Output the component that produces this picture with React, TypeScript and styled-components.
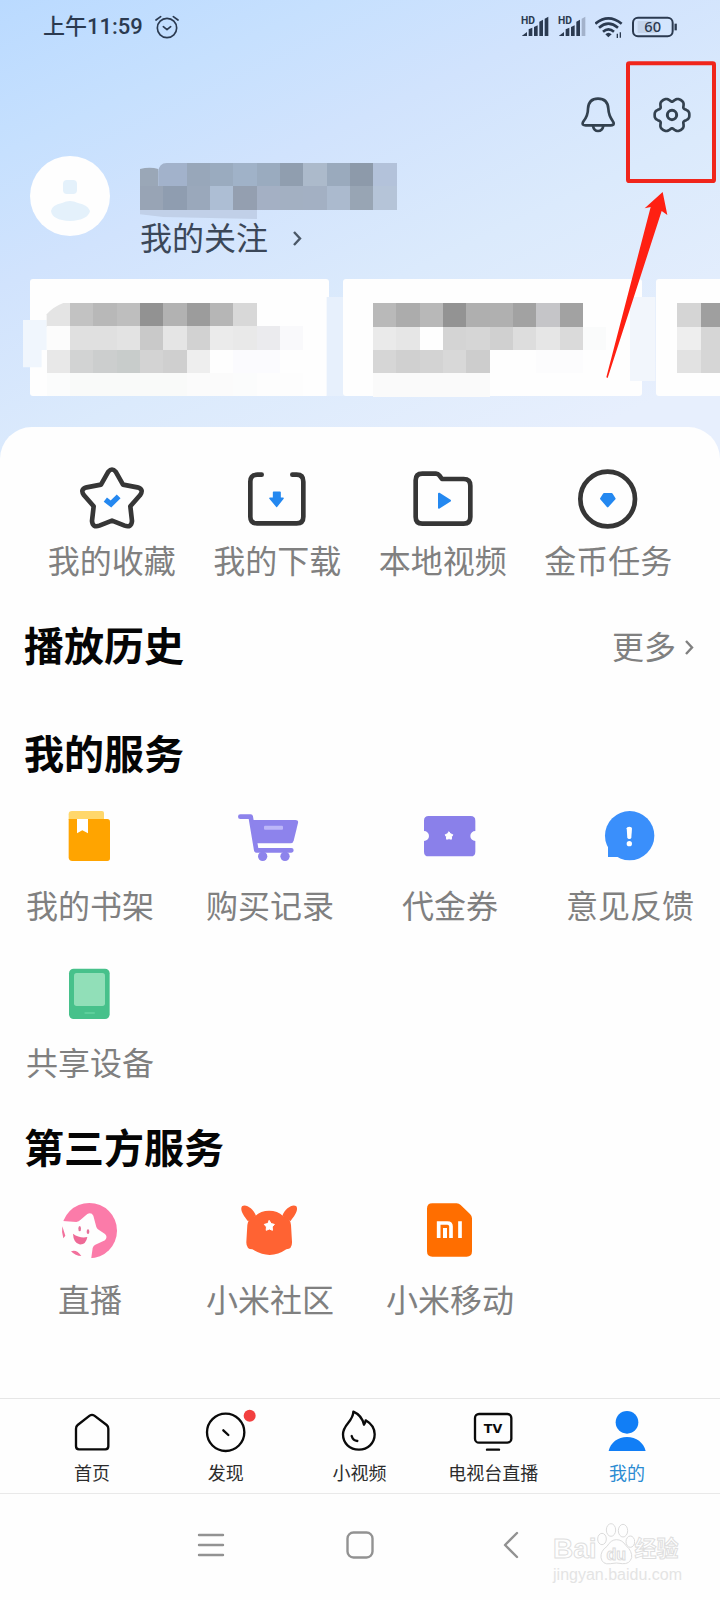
import React from 'react';
import styled, { createGlobalStyle } from 'styled-components';

const GlobalStyle = createGlobalStyle`
  * { box-sizing: border-box; }
  body {
    margin: 0;
    background: #fefefe;
    font-family: Roboto, "Noto Sans CJK SC", sans-serif;
  }
  h2 { margin: 0; }
  button { border: 0; padding: 0; background: none; font: inherit; color: inherit; }
  a { color: inherit; text-decoration: none; }
  svg { display: block; flex: none; }
`;

const Page = styled.div`
  position: relative;
  min-height: 100vh;
  display: flex;
  flex-direction: column;
  overflow: hidden;
  background: linear-gradient(155deg, #badaff 0, #c6e0fe 140px, #d1e3fd 260px, #dbeafc 420px, #e7effd 640px);
`;

const StatusBar = styled.div`
  height: 52px;
  padding: 1px 43px 0;
  display: flex;
  align-items: center;
  justify-content: space-between;
  color: #2b3a50;
`;

const StatusGroup = styled.div<{ $gap: number }>`
  display: flex;
  align-items: center;
  gap: ${(p) => p.$gap}px;
`;

const SignalIcon = styled.svg`
  overflow: visible;
`;

const Clock = styled.span`
  font-size: 22px;
  line-height: 32px;
  font-weight: 500;
`;

const Actions = styled.div`
  height: 104px;
  padding: 22px 29px 0 0;
  display: flex;
  align-items: center;
  justify-content: flex-end;
  gap: 36px;
`;

const Profile = styled.section`
  display: flex;
  gap: 30px;
  padding: 0 30px;
`;

const ProfileText = styled.div`
  padding-top: 7px;
`;

const FollowLink = styled.a`
  display: flex;
  align-items: center;
  gap: 24px;
  font-size: 32px;
  line-height: 40px;
  color: #3b4758;
`;

const CardStrip = styled.section`
  display: flex;
  gap: 14px;
  padding: 20px 0 31px 30px;
  overflow: hidden;
`;

const Card = styled.article`
  flex: none;
  width: 299px;
  height: 117px;
  background: #fefefe;
  border-radius: 3px;

  svg { margin-left: -7px; overflow: visible; }
`;

const Sheet = styled.main`
  flex: 1;
  padding: 40px 0 77px;
  background: #fefefe;
  border-radius: 32px 32px 0 0;
`;

const IconGrid = styled.div<{ $inset: number; $gap: number }>`
  display: grid;
  grid-template-columns: repeat(4, 1fr);
  row-gap: 34px;
  padding: 0 ${(p) => p.$inset}px;

  a { gap: ${(p) => p.$gap}px; }
`;

const IconLink = styled.a`
  display: flex;
  flex-direction: column;
  align-items: center;
  font-size: 32px;
  line-height: 40px;
  color: #808080;
  white-space: nowrap;
`;

const SectionHead = styled.div<{ $top: number; $bottom: number }>`
  display: flex;
  align-items: center;
  justify-content: space-between;
  padding: 0 24px;
  margin: ${(p) => p.$top}px 0 ${(p) => p.$bottom}px;
`;

const SectionTitle = styled.h2`
  font-size: 40px;
  line-height: 56px;
  font-weight: 700;
  color: #050505;
`;

const MoreLink = styled.a`
  display: flex;
  align-items: center;
  gap: 8px;
  font-size: 32px;
  line-height: 40px;
  color: #808080;
`;

const TabBar = styled.nav`
  display: grid;
  grid-template-columns: repeat(5, 1fr);
  padding: 10px 26px 7px 25px;
  background: #fefefe;
  border-top: 1px solid #e6e6e6;
  border-bottom: 1px solid #e9e9e9;
`;

const Tab = styled.a<{ $active?: boolean }>`
  display: flex;
  flex-direction: column;
  align-items: center;
  gap: 9px;
  font-size: 18px;
  line-height: 24px;
  color: ${(p) => (p.$active ? '#2b8bd2' : '#2c2c2c')};
  white-space: nowrap;

  svg { overflow: visible; }
`;

const SystemNav = styled.nav`
  display: flex;
  align-items: center;
  justify-content: center;
  gap: 118px;
  height: 106px;
  padding-bottom: 4px;
  background: #fefefe;
`;

const Annotation = styled.svg`
  position: absolute;
  top: 60px;
  right: 0;
  pointer-events: none;
`;

const Watermark = styled.div`
  position: absolute;
  right: 38px;
  bottom: 15px;
  color: #fefefe;
  font-family: "Liberation Sans", "Noto Sans CJK SC", sans-serif;
  -webkit-text-stroke: 1px #dedede;
`;

const WatermarkLogo = styled.div`
  display: flex;
  align-items: flex-end;
  font-size: 28px;
  line-height: 32px;
  font-weight: 700;
`;

const WatermarkName = styled.span`
  font-size: 22px;
`;

const WatermarkUrl = styled.div`
  font-size: 16px;
  line-height: 20px;
  color: #e4e4e4;
  -webkit-text-stroke: 0;
`;

type ArtProps = { size?: number; box: string; children: React.ReactNode };

const Art = ({ size = 64, box, children }: ArtProps) => (
  <svg width={size} height={size} viewBox={box} fill="none" strokeLinecap="round" strokeLinejoin="round" aria-hidden="true">
    {children}
  </svg>
);

const Chevron = ({ color }: { color: string }) => (
  <svg width="12" height="18" viewBox="0 0 12 18" fill="none" aria-hidden="true">
    <path d="M2 2L8 8.500L2 15" stroke={color} strokeWidth="2.400" />
  </svg>
);

/* Blurred-out text: rows of 70-unit tiles, three units to the pixel. */
const Tiles = ({ x, y, rows }: { x: number; y: number; rows: string[] }) => (
  <g shapeRendering="crispEdges">
    {rows.map((row, r) =>
      row.split(' ').map((c, i) => (
        <rect key={`${r}-${i}`} x={x + i * 70} y={y + r * 70} width="70" height="70" fill={`#${c}`} />
      )),
    )}
  </g>
);

const gearPath = (() => {
  const pts: string[] = [];
  for (let a = 0; a < 360; a += 4) {
    const t = (a * Math.PI) / 180;
    const r = 52 - 12 * Math.pow((1 - Math.cos(6 * t)) / 2, 2);
    pts.push(`${(936 + r * Math.cos(t)).toFixed(1)},${(344 + r * Math.sin(t)).toFixed(1)}`);
  }
  return `M${pts.join('L')}Z`;
})();

const starPoints = (cx: number, cy: number, outer: number, inner: number) =>
  Array.from({ length: 10 }, (_, i) => {
    const r = i % 2 ? inner : outer;
    const t = (i * 36 - 90) * (Math.PI / 180);
    return `${(cx + r * Math.cos(t)).toFixed(1)},${(cy + r * Math.sin(t)).toFixed(1)}`;
  }).join(' ');

const Signal = ({ weak }: { weak?: boolean }) => (
  <SignalIcon width="29" height="23" viewBox="0 0 87 69" fill="#2b3a50" aria-hidden="true">
    <text x="0" y="27" fontSize="31" fontWeight="700" fontFamily="Roboto" fill="#2b3a50">HD</text>
    <path d="M3 62L18 51V63H3ZM23 43L34 38V63H23ZM39 36L50 31V63H39ZM55 20L66 14V63H55Z" />
    <path d="M71 11L82 5V63H71Z" fill={weak ? '#a3b2cb' : '#2b3a50'} />
  </SignalIcon>
);

const quickLinks = [
  {
    label: '我的收藏',
    art: (
      <Art box="240 81 192 192">
        <path d="M303 134L325 95Q336 82 347 95L369 134L412 142Q433 148 420 166L391 199L396 243Q394 264 374 257L336 242L298 257Q278 264 276 243L281 199L252 166Q239 148 260 142Z" stroke="#363636" strokeWidth="14" />
        <path d="M316 179L333 192L356 169" stroke="#2488f0" strokeWidth="16" strokeLinecap="butt" strokeLinejoin="miter" />
      </Art>
    ),
  },
  {
    label: '我的下载',
    art: (
      <Art box="735 81 192 192">
        <path d="M785 104H772Q751 104 751 125V230Q751 250 771 250H890Q910 250 910 230V125Q910 104 890 104H877" stroke="#363636" strokeWidth="14" />
        <path d="M821 157H840V175H849L830 199L810 175H821Z" fill="#2488f0" stroke="#2488f0" strokeWidth="5" />
      </Art>
    ),
  },
  {
    label: '本地视频',
    art: (
      <Art box="150 81 192 192">
        <path d="M184 101H225Q231 101 235 106L243 117H308Q328 117 328 137V231Q328 251 308 251H184Q164 251 164 231V121Q164 101 184 101Z" stroke="#363636" strokeWidth="14" />
        <path d="M234 161L267 182L234 203Z" fill="#2488f0" stroke="#2488f0" strokeWidth="6" />
      </Art>
    ),
  },
  {
    label: '金币任务',
    art: (
      <Art box="648 81 192 192">
        <circle cx="743" cy="177" r="82" stroke="#363636" strokeWidth="14" />
        <path d="M732 162H755L764 176L743 199L723 176Z" fill="#2488f0" stroke="#2488f0" strokeWidth="6" />
      </Art>
    ),
  },
];

const services = [
  {
    label: '我的书架',
    art: (
      <Art box="174 252 192 192">
        <path d="M206 300V283Q206 273 216 273H306Q312 273 312 279V300Z" fill="#ffd76b" />
        <path d="M206 297H322Q330 297 330 305V415Q330 423 322 423H217Q206 423 206 412Z" fill="#ffa400" />
        <path d="M231 297H264V340L247 331L231 340Z" fill="#fff" />
      </Art>
    ),
  },
  {
    label: '购买记录',
    art: (
      <Art box="714 252 192 192">
        <path d="M721 290H752L769 391H874" stroke="#8d83ec" strokeWidth="14" />
        <path d="M757 300H886Q896 300 894 309L881 362Q879 370 871 370H768Z" fill="#8d83ec" />
        <circle cx="788" cy="409" r="14" fill="#8d83ec" />
        <circle cx="855" cy="409" r="14" fill="#8d83ec" />
        <rect x="792" y="317" width="57" height="12" rx="3" fill="#bcb6f8" />
      </Art>
    ),
  },
  {
    label: '代金券',
    art: (
      <Art box="174 72 192 192">
        <path d="M206 108H332Q346 108 346 122V153A15 15 0 0 0 346 183V215Q346 229 332 229H206Q192 229 192 215V183A15 15 0 0 0 192 153V122Q192 108 206 108Z" fill="#8a80ea" />
        <polygon points={starPoints(267, 168, 12, 8)} fill="#fff" stroke="#fff" strokeWidth="3" />
      </Art>
    ),
  },
  {
    label: '意见反馈',
    art: (
      <Art box="714 72 192 192">
        <circle cx="809" cy="167" r="74" fill="#3a8ffb" />
        <path d="M744 195V231H800V195Z" fill="#3a8ffb" />
        <path d="M800 145Q800 140 808 140Q816 140 816 145L814 173Q813 177 808 177Q803 177 802 173Z" fill="#fff" />
        <circle cx="808" cy="191" r="8" fill="#fff" />
      </Art>
    ),
  },
  {
    label: '共享设备',
    art: (
      <Art box="174 723 192 192">
        <rect x="207" y="746" width="122" height="151" rx="14" fill="#47c18b" />
        <rect x="222" y="759" width="93" height="99" rx="8" fill="#91dfb8" />
        <path d="M256 879H282" stroke="#5dcf9b" strokeWidth="6" />
      </Art>
    ),
  },
];

const partners = [
  {
    label: '直播',
    art: (
      <Art box="174 264 192 192">
        <circle cx="268" cy="362" r="83" fill="#fb7ba9" />
        <path d="M178 332L229 336Q237 335 241 330L262 312Q274 306 280 317L289 351Q291 357 297 360L315 372Q324 380 315 391L286 404Q280 407 278 414L273 450H178Z" fill="#fefefe" />
        <path d="M187 349L196 377L190 385Q184 366 187 349ZM213 424Q230 417 244 438Q226 438 213 424Z" fill="#f2709c" />
        <ellipse cx="239" cy="356" rx="4" ry="8" fill="#e5709a" />
        <ellipse cx="264" cy="365" rx="4" ry="7" fill="#e5709a" />
        <path d="M219 371Q240 386 262 381Q258 405 238 403Q220 397 219 371Z" fill="#ee6a97" />
      </Art>
    ),
  },
  {
    label: '小米社区',
    art: (
      <Art box="714 264 192 192">
        <path d="M766 318C785 297 830 297 849 318Q870 322 873 345L876 395Q877 417 859 418Q810 452 757 418Q738 417 739 395L742 345Q746 322 766 318Z" fill="#ff6333" />
        <path d="M744 334C730 316 719 299 726 289C736 280 759 294 768 317ZM871 334C885 316 896 299 889 289C879 280 856 294 847 317Z" fill="#ff6333" />
        <polygon points={starPoints(808, 348, 16, 9)} fill="#fff" stroke="#fff" strokeWidth="3" />
      </Art>
    ),
  },
  {
    label: '小米移动',
    art: (
      <Art box="174 54 192 192">
        <path d="M217 70H290Q297 70 302 75L330 102Q336 108 336 115V214Q336 230 320 230H217Q201 230 201 214V86Q201 70 217 70Z" fill="#ff6e00" />
        <path d="M236 174V129H262Q273 129 273 139V174M300 124V174" stroke="#fff" strokeWidth="11" strokeLinecap="butt" strokeLinejoin="miter" />
        <path d="M255 144V174" stroke="#fff" strokeWidth="12" strokeLinecap="butt" />
      </Art>
    ),
  },
];

const tabs = [
  {
    label: '首页',
    art: (
      <Art size={44} box="210 87 132 132">
        <path d="M228 146Q228 139 233 135L269 107Q276 102 283 107L320 135Q325 139 325 146V199Q325 208 316 208H237Q228 208 228 199Z" stroke="#0a0a0a" strokeWidth="7" />
      </Art>
    ),
  },
  {
    label: '发现',
    art: (
      <Art size={44} box="610 87 132 132">
        <circle cx="675" cy="157" r="56" stroke="#0a0a0a" strokeWidth="7" />
        <path d="M668 151L683 165" stroke="#0a0a0a" strokeWidth="7" />
        <circle cx="747" cy="107" r="18" fill="#f23f3f" />
      </Art>
    ),
  },
  {
    label: '小视频',
    art: (
      <Art size={44} box="-66 87 132 132">
        <path d="M-17 95C0 102 10 114 15 134Q19 130 20 121C37 131 47 145 47 163C47 190 26 209 0 209C-28 209 -48 190 -48 163C-48 132 -18 126 -17 95Z" stroke="#0a0a0a" strokeWidth="7" />
        <path d="M-22 168Q-18 182 -5 183" stroke="#0a0a0a" strokeWidth="7" />
      </Art>
    ),
  },
  {
    label: '电视台直播',
    art: (
      <Art size={44} box="334 87 132 132">
        <rect x="346" y="102" width="109" height="86" rx="12" stroke="#0a0a0a" strokeWidth="7" />
        <path d="M382 209H418" stroke="#0a0a0a" strokeWidth="7" />
        <text x="400" y="160" textAnchor="middle" fontSize="38" fontWeight="700" fontFamily="DejaVu Sans" fill="#0a0a0a">TV</text>
      </Art>
    ),
  },
  {
    label: '我的',
    active: true,
    art: (
      <Art size={44} box="736 87 132 132">
        <circle cx="802" cy="127" r="34" fill="#117ef6" />
        <path d="M747 213C752 188 775 171 802 171C830 171 852 188 858 213Z" fill="#117ef6" />
      </Art>
    ),
  },
];

export default function App() {
  return (
    <>
      <GlobalStyle />
      <Page>
        <StatusBar>
          <StatusGroup $gap={12}>
            <Clock>上午11:59</Clock>
            <Art size={24} box="466 42 72 72">
              <circle cx="502" cy="81" r="29" stroke="#2b3a50" strokeWidth="5" />
              <path d="M491 77L502 86L513 77M469 57L483 47M521 47L535 57" stroke="#2b3a50" strokeWidth="5" />
            </Art>
          </StatusGroup>
          <StatusGroup $gap={8}>
            <Signal />
            <Signal weak />
            <svg width="29" height="23" viewBox="702 42 87 69" fill="none" stroke="#2b3a50" strokeWidth="8" aria-hidden="true">
              <path d="M703 68Q742 36 782 68M714 80Q742 56 771 80M726 92Q742 78 759 92" />
              <path d="M733 100Q742 91 752 100L742 109Z" fill="#2b3a50" stroke="none" />
              <path d="M769 98V113M778 94V110" strokeWidth="4" />
            </svg>
            <svg width="45" height="23" viewBox="816 42 135 69" fill="none" aria-hidden="true">
              <rect x="833" y="60" width="58" height="36" fill="#c3d3ea" />
              <rect x="819" y="50" width="119" height="56" rx="15" stroke="#2b3a50" strokeWidth="6" />
              <path d="M947 68V88" stroke="#2b3a50" strokeWidth="7" />
              <text x="878" y="93" textAnchor="middle" fontSize="44" fontWeight="500" fontFamily="Noto Sans" fill="#2b3a50">60</text>
            </svg>
          </StatusGroup>
        </StatusBar>

        <Actions>
          <button type="button" aria-label="通知">
            <Art size={38} box="657 288 114 114">
              <path d="M669 374Q666 370 671 363Q684 346 684 326Q686 296 714 296Q743 296 745 326Q746 346 758 363Q763 370 760 374Q757 376 752 376H677Q671 376 669 374Z" stroke="#33414f" strokeWidth="8" />
              <path d="M699 378Q702 393 714 393Q727 393 730 378" stroke="#33414f" strokeWidth="8" />
            </Art>
          </button>
          <button type="button" aria-label="设置">
            <Art size={38} box="879 287 114 114">
              <path d={gearPath} stroke="#33414f" strokeWidth="8" />
              <circle cx="936" cy="344" r="14" stroke="#33414f" strokeWidth="9" />
            </Art>
          </button>
        </Actions>

        <Profile>
          <Art size={80} box="0 0 80 80">
            <circle cx="40" cy="40" r="40" fill="#fefefe" />
            <rect x="33" y="24" width="14" height="14" rx="4" fill="#e4f1fb" />
            <path d="M21 55Q22 49 32 47Q40 43 48 47Q58 49 60 55Q58 64 40 65Q22 64 21 55Z" fill="#e4f1fb" />
          </Art>
          <ProfileText>
            <svg width="257" height="56" viewBox="420 489 771 168" aria-hidden="true">
              <path d="M420 629H771V657L490 651L420 643Z" fill="#c1d0e8" />
              <path d="M420 507Q450 500 475 507V560H420Z" fill="#9aa7b7" />
              <path d="M475 560V515Q477 489 500 489H561V560Z" fill="#a2b2cb" />
              <Tiles x={560} y={489} rows={['98a7ba 9aabbf a0b2c8 9aabbf 909eaf acbacb 9aaabd 8d9aaa b3c2da']} />
              <Tiles x={420} y={559} rows={['98a4b5 8f9db0 9aa8bb adbed4 949fb0 a4b0c4 a3b0c2 a3b0c3 abbace 98a5b4 b5c4d8']} />
            </svg>
            <FollowLink href="#follow">
              我的关注
              <Chevron color="#4b5867" />
            </FollowLink>
          </ProfileText>
        </Profile>

        <CardStrip>
          <Card>
            <svg width="327" height="117" viewBox="69 57 981 351" aria-hidden="true">
              <path d="M69 180H140V270H125V322H69Z" fill="#f0f6fd" />
              <rect x="980" y="111" width="70" height="297" fill="#e7f0fc" />
              <path d="M210 129H190Q160 140 140 163V200H210Z" fill="#e4e4e4" />
              <Tiles x={210} y={129} rows={['c2c2c2 b8b8b8 bebebe 929292 b2b2b2 9c9c9c b6b6b6 d8d8d8']} />
              <Tiles
                x={140}
                y={199}
                rows={[
                  'fcfcfc e0e0e0 e0e0e0 e3e3e3 c9c9c9 e5e5e5 d2d2d2 ebebeb e9e9e9 ebebee f9f9fb',
                  'e8e8e8 d2d3d3 cccece c8cccb d3d3d3 cfcfcf eeeeee fefefe fbfbfe fbfbfe fefefe',
                  'fbfcfc f9faf9 f9faf9 f9faf9 f9faf9 f9faf9 fbfbfb fbfbfb fbfcfc fdfdfd fdfdfd',
                ]}
              />
            </svg>
          </Card>
          <Card>
            <svg width="327" height="117" viewBox="-72 297 981 351" aria-hidden="true">
              <rect x="810" y="351" width="76" height="252" fill="#f2f6fc" />
              <Tiles
                x={39}
                y={370}
                rows={[
                  'b9b9b9 acacac b8b8b8 939393 afafaf b0b0b0 a2a2a2 c5c5c8 a2a2a2',
                  'eaeaea e6e6e6 fefefe d4d4d4 d6d6d6 d0d0d0 dddddd e6e6e6 dadada fafbfb',
                  'd6d6d6 d0d0d0 d3d3d3 d8d8d8 cdcdcd fefefe fefefe fcfcfd fcfcfd',
                  'fafafa fafafa fafafa fafafa fafafa',
                ]}
              />
            </svg>
          </Card>
          <Card>
            <svg width="327" height="117" viewBox="865 297 981 351" aria-hidden="true">
              <Tiles x={950} y={370} rows={['d5d5d5 9f9f9f', 'eeeeee d6d6d6', 'e2e2e2 d6d6d6']} />
            </svg>
          </Card>
        </CardStrip>

        <Sheet>
          <IconGrid $inset={29} $gap={11}>
            {quickLinks.map((item) => (
              <IconLink key={item.label} href="#quick">
                {item.art}
                {item.label}
              </IconLink>
            ))}
          </IconGrid>

          <SectionHead $top={38} $bottom={0}>
            <SectionTitle>播放历史</SectionTitle>
            <MoreLink href="#history">
              更多
              <Chevron color="#808080" />
            </MoreLink>
          </SectionHead>

          <SectionHead $top={52} $bottom={20}>
            <SectionTitle>我的服务</SectionTitle>
          </SectionHead>
          <IconGrid $inset={0} $gap={19}>
            {services.map((item) => (
              <IconLink key={item.label} href="#service">
                {item.art}
                {item.label}
              </IconLink>
            ))}
          </IconGrid>

          <SectionHead $top={38} $bottom={20}>
            <SectionTitle>第三方服务</SectionTitle>
          </SectionHead>
          <IconGrid $inset={0} $gap={19}>
            {partners.map((item) => (
              <IconLink key={item.label} href="#partner">
                {item.art}
                {item.label}
              </IconLink>
            ))}
          </IconGrid>
        </Sheet>

        <TabBar>
          {tabs.map((tab) => (
            <Tab key={tab.label} href="#tab" $active={tab.active} aria-current={tab.active ? 'page' : undefined}>
              {tab.art}
              {tab.label}
            </Tab>
          ))}
        </TabBar>

        <SystemNav>
          <button type="button" aria-label="菜单">
            <Art size={32} box="0 0 32 32">
              <path d="M5 6H29M5 16H29M5 26H29" stroke="#929292" strokeWidth="2.400" />
            </Art>
          </button>
          <button type="button" aria-label="主屏幕">
            <Art size={32} box="0 0 32 32">
              <rect x="3.500" y="3.500" width="25" height="25" rx="6" stroke="#929292" strokeWidth="2.400" />
            </Art>
          </button>
          <button type="button" aria-label="返回">
            <Art size={32} box="0 0 32 32">
              <path d="M23 4L11 16L23 28" stroke="#929292" strokeWidth="2.400" />
            </Art>
          </button>
        </SystemNav>

        <Annotation width="120" height="324" viewBox="1800 180 360 972" fill="none" aria-hidden="true">
          <rect x="1884" y="190" width="258" height="353" rx="4" stroke="#f0251b" strokeWidth="12" />
          <path d="M1988 576L2002 645L1985 633L1823 1134L1819 1132L1952 621L1934 625Z" fill="#ff2012" />
        </Annotation>

        <Watermark>
          <WatermarkLogo>
            Bai
            <svg width="38" height="42" viewBox="708 426 114 126" fill="#fefefe" stroke="#dcdcdc" strokeWidth="3" aria-hidden="true">
              <ellipse cx="750" cy="447" rx="14" ry="19" />
              <ellipse cx="786" cy="449" rx="14" ry="19" />
              <ellipse cx="723" cy="474" rx="13" ry="17" />
              <ellipse cx="808" cy="482" rx="13" ry="17" />
              <path d="M766 476Q784 476 795 494Q814 510 812 530Q806 550 784 548Q766 544 748 548Q724 552 720 530Q718 510 738 496Q750 476 766 476Z" />
              <text x="766" y="537" textAnchor="middle" fontSize="48" fontFamily="Liberation Sans" fontWeight="700">du</text>
            </svg>
            <WatermarkName>经验</WatermarkName>
          </WatermarkLogo>
          <WatermarkUrl>jingyan.baidu.com</WatermarkUrl>
        </Watermark>
      </Page>
    </>
  );
}
